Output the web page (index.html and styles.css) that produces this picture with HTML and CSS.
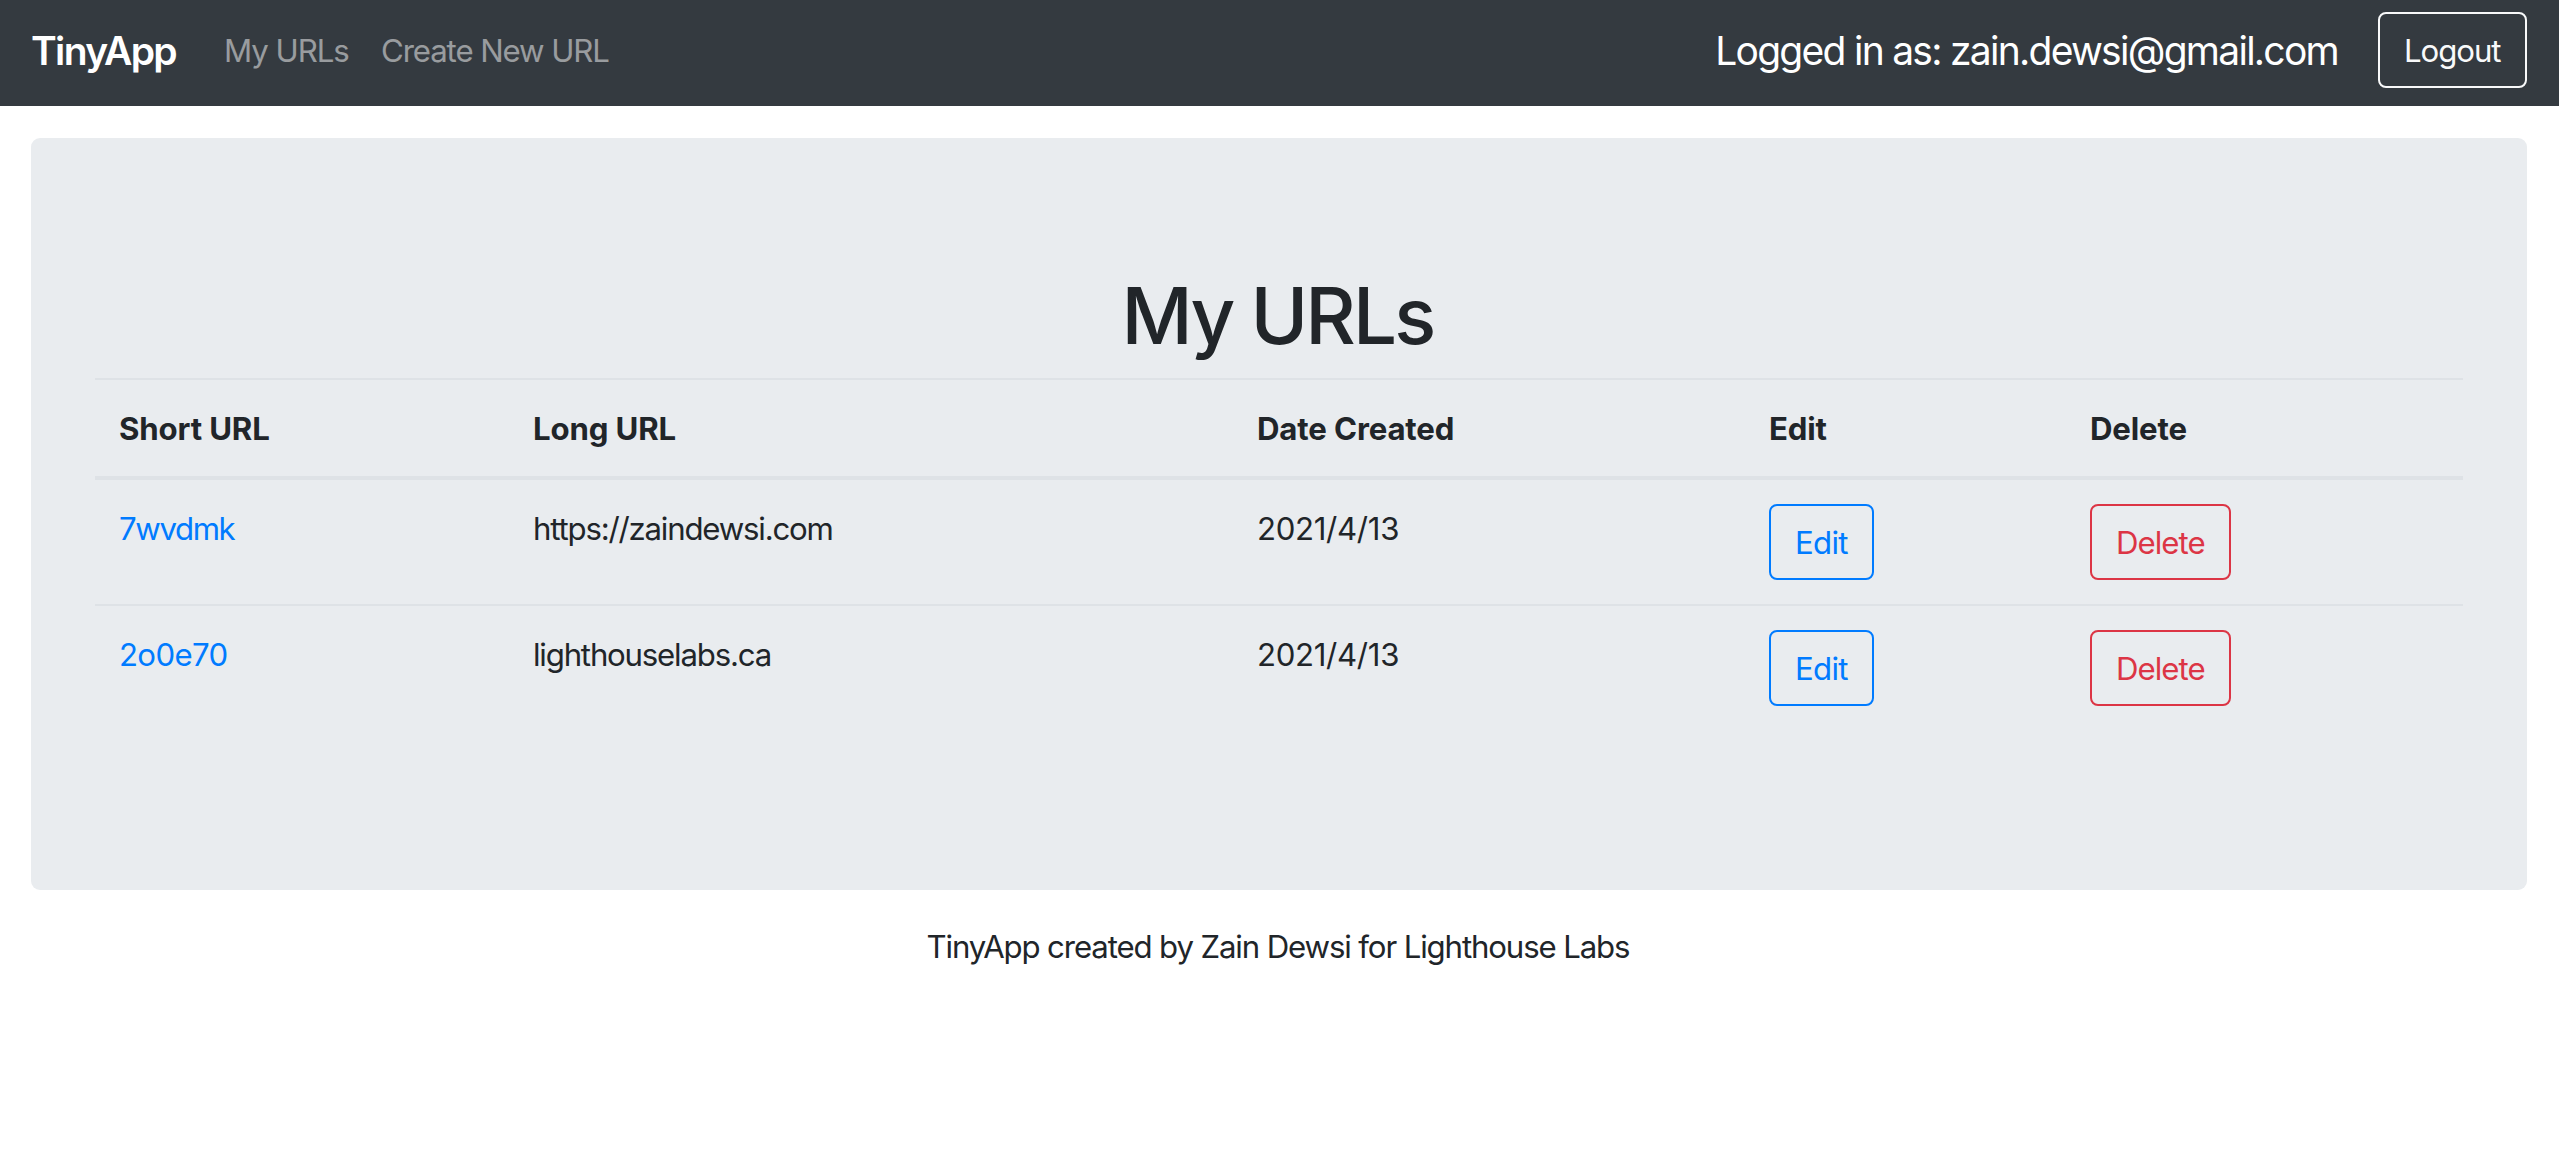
FILE: index.html
```html
<!DOCTYPE html>
<html lang="en">
<head>
<meta charset="utf-8">
<title>TinyApp</title>
<link rel="stylesheet" href="styles.css">
</head>
<body>
<nav class="navbar">
  <a class="brand">TinyApp</a>
  <div class="links"><a class="link-urls">My URLs</a><a class="link-new">Create New URL</a></div>
  <div class="session"><span class="user">Logged in as: zain.dewsi@gmail.com</span><button class="btn btn-light">Logout</button></div>
</nav>
<main class="jumbotron">
  <h1>My URLs</h1>
  <table>
    <colgroup><col class="c-short"><col class="c-long"><col class="c-date"><col class="c-edit"><col class="c-delete"></colgroup>
    <thead><tr><th>Short URL</th><th>Long URL</th><th>Date Created</th><th>Edit</th><th>Delete</th></tr></thead>
    <tbody>
      <tr><td><a class="short">7wvdmk</a></td><td class="long">https://zaindewsi.com</td><td class="date">2021/4/13</td><td class="action"><button class="btn btn-primary">Edit</button></td><td class="action"><button class="btn btn-danger">Delete</button></td></tr>
      <tr><td><a class="short digits">2o0e70</a></td><td class="long">lighthouselabs.ca</td><td class="date">2021/4/13</td><td class="action"><button class="btn btn-primary">Edit</button></td><td class="action"><button class="btn btn-danger">Delete</button></td></tr>
    </tbody>
  </table>
</main>
<footer>TinyApp created by Zain Dewsi for Lighthouse Labs</footer>
</body>
</html>
```
FILE: styles.css
```css
* { box-sizing: border-box; }
body {
  margin: 0;
  background: #fff;
  color: #212529;
  font: 400 31.2px/50px Inter, "Liberation Sans", sans-serif;
}
.navbar {
  display: flex;
  align-items: center;
  height: 106px;
  padding: 0 32px 6px 31px;
  background: #343a40;
  color: #fff;
}
.brand {
  width: 145px;
  margin-right: 48px;
  padding-top: 2px;
  font-size: 39px;
  font-weight: 600;
  letter-spacing: -1.64px;
  line-height: 48px;
}
.links { display: flex; gap: 32px; padding-top: 2px; color: rgba(255, 255, 255, .5); }
.link-urls { width: 125px; letter-spacing: -1.05px; white-space: nowrap; }
.link-new { letter-spacing: -1.1px; }
.session { display: flex; align-items: center; gap: 40px; margin-left: auto; }
.user { padding-top: 2px; font-size: 39px; letter-spacing: -1.73px; line-height: 48px; }
.btn {
  display: block;
  height: 76px;
  padding: 12px 0 10px 24px;
  border: 2px solid currentColor;
  border-radius: 8px;
  background: transparent;
  font: inherit;
  line-height: 50px;
  text-align: left;
  white-space: nowrap;
}
.btn-light { width: 149px; color: #f8f9fa; letter-spacing: -1.06px; }
.btn-primary { width: 105px; color: #007bff; letter-spacing: -.7px; }
.btn-danger { width: 141px; color: #dc3545; letter-spacing: -.98px; }
.jumbotron {
  height: 752px;
  margin: 32px 32px 32px 31px;
  padding: 128px 64px;
  border-radius: 9px;
  background: #e9ecef;
}
h1 {
  margin: 0 0 12px;
  padding-right: 3px;
  font-size: 78px;
  font-weight: 500;
  letter-spacing: -2.85px;
  line-height: 100px;
  text-align: center;
}
table { width: 100%; border-collapse: separate; border-spacing: 0; table-layout: fixed; }
th, td { padding: 24px 24px 22px; text-align: left; vertical-align: top; }
th {
  border-top: 2px solid #dee2e6;
  border-bottom: 4px solid #dee2e6;
  font-weight: 700;
  letter-spacing: -.15px;
}
td.action { padding-bottom: 24px; }
tbody tr + tr td { border-top: 2px solid #dee2e6; }
.c-short { width: 414px; }
.c-long { width: 724px; }
.c-date { width: 512px; }
.c-edit { width: 321px; }
.short { color: #007bff; letter-spacing: -1.38px; }
.digits { letter-spacing: -.65px; }
.long { letter-spacing: -1.2px; }
.date { letter-spacing: -.32px; }
footer { padding-right: 3px; letter-spacing: -1.13px; text-align: center; }
```
